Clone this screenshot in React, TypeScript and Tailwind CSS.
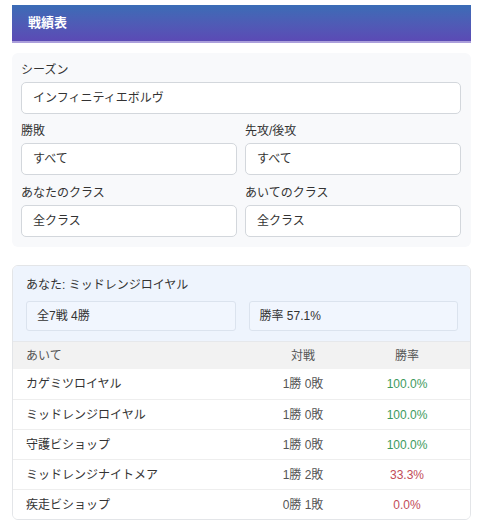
import React from "react";

const rows = [
  { name: "カゲミツロイヤル", rec: "1勝 0敗", rate: "100.0%", win: true },
  { name: "ミッドレンジロイヤル", rec: "1勝 0敗", rate: "100.0%", win: true },
  { name: "守護ビショップ", rec: "1勝 0敗", rate: "100.0%", win: true },
  { name: "ミッドレンジナイトメア", rec: "1勝 2敗", rate: "33.3%", win: false },
  { name: "疾走ビショップ", rec: "0勝 1敗", rate: "0.0%", win: false },
];

function Field({ label, value }: { label: string; value: string }) {
  return (
    <div>
      <div className="h-[20px] leading-[20px] mb-[2px] text-[12px] text-[#333]">{label}</div>
      <div className="h-[32px] rounded-[5px] border border-[#d3d7dc] bg-white pl-[11px] flex items-center text-[12px] text-[#333]">
        {value}
      </div>
    </div>
  );
}

export default function App() {
  return (
    <div
      className="w-[483px] h-[529px] bg-white px-3 pt-[5px]"
      style={{ fontFamily: '"Liberation Sans", "Noto Sans CJK JP", sans-serif' }}
    >
      <div className="h-[38px] bg-gradient-to-b from-[#3a6cb6] to-[#5b4ab5] border-b-2 border-[#ab9fdb] flex items-center pl-4">
        <span className="text-white font-bold text-[13px]">戦績表</span>
      </div>

      <div className="mt-[10px] bg-[#f8f9fb] rounded-[6px] pl-[9px] pr-[10px] pt-[7px] pb-[10px]">
        <Field label="シーズン" value="インフィニティエボルヴ" />
        <div className="grid grid-cols-2 gap-x-2 mt-[7px]">
          <Field label="勝敗" value="すべて" />
          <Field label="先攻/後攻" value="すべて" />
        </div>
        <div className="grid grid-cols-2 gap-x-2 mt-[8px]">
          <Field label="あなたのクラス" value="全クラス" />
          <Field label="あいてのクラス" value="全クラス" />
        </div>
      </div>

      <div className="mt-[18px] border border-[#e3e5e8] rounded-[6px] overflow-hidden">
        <div className="bg-[#eef4fd] pl-[13px] pr-[12px] pt-[10px] pb-[10px]">
          <div className="h-[18px] leading-[18px] text-[12px] text-[#333] mb-[7px]">
            あなた: ミッドレンジロイヤル
          </div>
          <div className="grid grid-cols-2 gap-x-[13px]">
            <div className="h-[30px] border border-[#dbe3ee] rounded-[3px] bg-[#f1f6fe] flex items-center pl-[10px] text-[12px] text-[#333]">
              全7戦 4勝
            </div>
            <div className="h-[30px] border border-[#dbe3ee] rounded-[3px] bg-[#f1f6fe] flex items-center pl-[10px] text-[12px] text-[#333]">
              勝率 57.1%
            </div>
          </div>
        </div>
        <div className="grid grid-cols-[1fr_104px_104px] h-[28px] items-center bg-[#f2f2f2] pl-[13px] pr-[11px] text-[12px] text-[#555] border-t border-[#e6e8eb]">
          <div>あいて</div>
          <div className="text-center">対戦</div>
          <div className="text-center">勝率</div>
        </div>
        {rows.map((r, i) => (
          <div
            key={i}
            className={`grid grid-cols-[1fr_104px_104px] h-[30px] items-center pl-[13px] pr-[11px] text-[12px] bg-white ${i > 0 ? "border-t border-[#eeeeee]" : ""}`}
          >
            <div className="text-[#333]">{r.name}</div>
            <div className="text-center text-[#555]">{r.rec}</div>
            <div className={`text-center ${r.win ? "text-[#3d9a5d]" : "text-[#c24c57]"}`}>{r.rate}</div>
          </div>
        ))}
      </div>
    </div>
  );
}
